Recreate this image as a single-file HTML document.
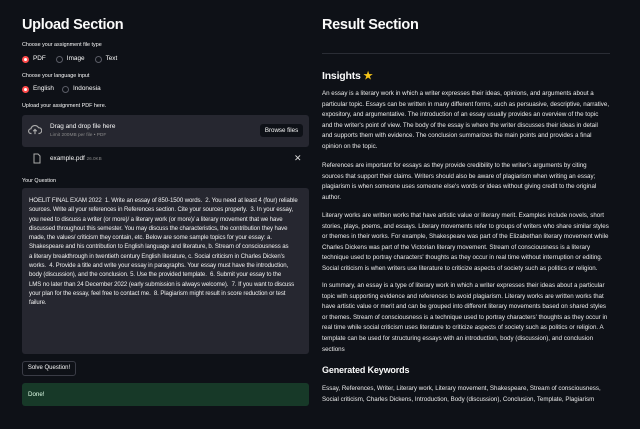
<!DOCTYPE html>
<html><head><meta charset="utf-8"><style>
*{margin:0;padding:0;box-sizing:border-box}
body{width:640px;height:429px;background:#0e1117;color:#fafafa;font-family:"Liberation Sans",sans-serif;position:relative;overflow:hidden}
.a{position:absolute}
h1{font-size:14.5px;font-weight:bold;line-height:20px;letter-spacing:-0.3px}
.lbl{font-size:5.4px;color:#fafafa;line-height:8px}
.radio{font-size:6.4px;line-height:10px;display:flex;align-items:center}
.rb{width:7px;height:7px;border-radius:50%;border:1px solid #5a5c66;display:inline-block;margin-right:4px}
.rb.on{border:2px solid #ff4b4b;background:#fff}
.p{position:absolute;left:322px;font-size:6.2px;line-height:10.6px;color:#ececec;white-space:nowrap}
.q{white-space:nowrap}
</style></head><body>
<div class="a" style="left:22px;top:15px"><h1>Upload Section</h1></div>
<div class="a lbl" style="left:22px;top:41px">Choose your assignment file type</div>
<div class="a radio" style="left:22px;top:54px"><span class="rb on"></span>PDF<span style="width:10px"></span><span class="rb"></span>Image<span style="width:10px"></span><span class="rb"></span>Text</div>
<div class="a lbl" style="left:22px;top:72px">Choose your language input</div>
<div class="a radio" style="left:22px;top:84px"><span class="rb on"></span>English<span style="width:8px"></span><span class="rb"></span>Indonesia</div>
<div class="a lbl" style="left:22px;top:102px">Upload your assignment PDF here.</div>
<div class="a" style="left:22px;top:115px;width:287px;height:32px;background:#262730;border-radius:3px">
 <svg class="a" style="left:6px;top:9px" width="14" height="12" viewBox="0 0 24 20"><path d="M6 16H5a4 4 0 0 1 0-8 7 7 0 0 1 13-2 5 5 0 0 1 1 10h-1M12 9v8M9 12l3-3 3 3" fill="none" stroke="#aaa" stroke-width="2"/></svg>
 <div class="a" style="left:28px;top:8px;font-size:6.4px">Drag and drop file here</div>
 <div class="a" style="left:28px;top:18px;font-size:4.8px;color:#888">Limit 200MB per file • PDF</div>
 <div class="a" style="left:238px;top:9px;width:43px;height:13px;background:#0e1117;border-radius:3px;font-size:6.2px;line-height:13px;text-align:center">Browse files</div>
</div>
<svg class="a" style="left:33px;top:153px" width="8" height="11" viewBox="0 0 8 11"><path d="M1 1h4l2 2v7H1z" fill="none" stroke="#aaa" stroke-width="1"/></svg>
<div class="a" style="left:50px;top:155px;font-size:6.4px">example.pdf <span style="font-size:4.6px;color:#888">26.0KB</span></div>
<div class="a" style="left:294px;top:153px;font-size:9px;color:#ddd">✕</div>
<div class="a lbl" style="left:22px;top:177px">Your Question</div>
<div class="a" style="left:22px;top:188px;width:287px;height:166px;background:#262730;border-radius:3px;padding:8px 7px;font-size:6.1px;line-height:9.3px;color:#f0f0f0;letter-spacing:-0.1px">
<div class="q">HOELIT FINAL EXAM 2022 &nbsp;1. Write an essay of 850-1500 words. &nbsp;2. You need at least 4 (four) reliable</div>
<div class="q">sources. Write all your references in References section. Cite your sources properly. &nbsp;3. In your essay,</div>
<div class="q">you need to discuss a writer (or more)/ a literary work (or more)/ a literary movement that we have</div>
<div class="q">discussed throughout this semester. You may discuss the characteristics, the contribution they have</div>
<div class="q">made, the values/ criticism they contain, etc. Below are some sample topics for your essay: a.</div>
<div class="q">Shakespeare and his contribution to English language and literature, b. Stream of consciousness as</div>
<div class="q">a literary breakthrough in twentieth century English literature, c. Social criticism in Charles Dicken's</div>
<div class="q">works. &nbsp;4. Provide a title and write your essay in paragraphs. Your essay must have the introduction,</div>
<div class="q">body (discussion), and the conclusion. 5. Use the provided template. &nbsp;6. Submit your essay to the</div>
<div class="q">LMS no later than 24 December 2022 (early submission is always welcome). &nbsp;7. If you want to discuss</div>
<div class="q">your plan for the essay, feel free to contact me. &nbsp;8. Plagiarism might result in score reduction or test</div>
<div class="q">failure.</div>
</div>
<div class="a" style="left:22px;top:361px;width:54px;height:15px;border:1px solid #3a3c46;border-radius:3px;font-size:6px;line-height:13px;text-align:center">Solve Question!</div>
<div class="a" style="left:22px;top:383px;width:287px;height:23px;background:#173928;border-radius:3px;font-size:6.2px;line-height:23px;padding-left:6px;color:#dfffe8">Done!</div>

<div class="a" style="left:322px;top:15px"><h1>Result Section</h1></div>
<div class="a" style="left:322px;top:53px;width:288px;height:1px;background:#2a2d35"></div>
<div class="a" style="left:322px;top:70px;font-size:10.5px;font-weight:bold;letter-spacing:-0.2px">Insights <span style="color:#f5c518">★</span></div>
<div class="p" style="top:89px">An essay is a literary work in which a writer expresses their ideas, opinions, and arguments about a<br>particular topic. Essays can be written in many different forms, such as persuasive, descriptive, narrative,<br>expository, and argumentative. The introduction of an essay usually provides an overview of the topic<br>and the writer's point of view. The body of the essay is where the writer discusses their ideas in detail<br>and supports them with evidence. The conclusion summarizes the main points and provides a final<br>opinion on the topic.</div>
<div class="p" style="top:161px">References are important for essays as they provide credibility to the writer's arguments by citing<br>sources that support their claims. Writers should also be aware of plagiarism when writing an essay;<br>plagiarism is when someone uses someone else's words or ideas without giving credit to the original<br>author.</div>
<div class="p" style="top:211px">Literary works are written works that have artistic value or literary merit. Examples include novels, short<br>stories, plays, poems, and essays. Literary movements refer to groups of writers who share similar styles<br>or themes in their works. For example, Shakespeare was part of the Elizabethan literary movement while<br>Charles Dickens was part of the Victorian literary movement. Stream of consciousness is a literary<br>technique used to portray characters' thoughts as they occur in real time without interruption or editing.<br>Social criticism is when writers use literature to criticize aspects of society such as politics or religion.</div>
<div class="p" style="top:281px">In summary, an essay is a type of literary work in which a writer expresses their ideas about a particular<br>topic with supporting evidence and references to avoid plagiarism. Literary works are written works that<br>have artistic value or merit and can be grouped into different literary movements based on shared styles<br>or themes. Stream of consciousness is a technique used to portray characters' thoughts as they occur in<br>real time while social criticism uses literature to criticize aspects of society such as politics or religion. A<br>template can be used for structuring essays with an introduction, body (discussion), and conclusion<br>sections</div>
<div class="a" style="left:322px;top:365px;font-size:9px;font-weight:bold;letter-spacing:-0.15px">Generated Keywords</div>
<div class="p" style="top:384px">Essay, References, Writer, Literary work, Literary movement, Shakespeare, Stream of consciousness,<br>Social criticism, Charles Dickens, Introduction, Body (discussion), Conclusion, Template, Plagiarism</div>
</body></html>
